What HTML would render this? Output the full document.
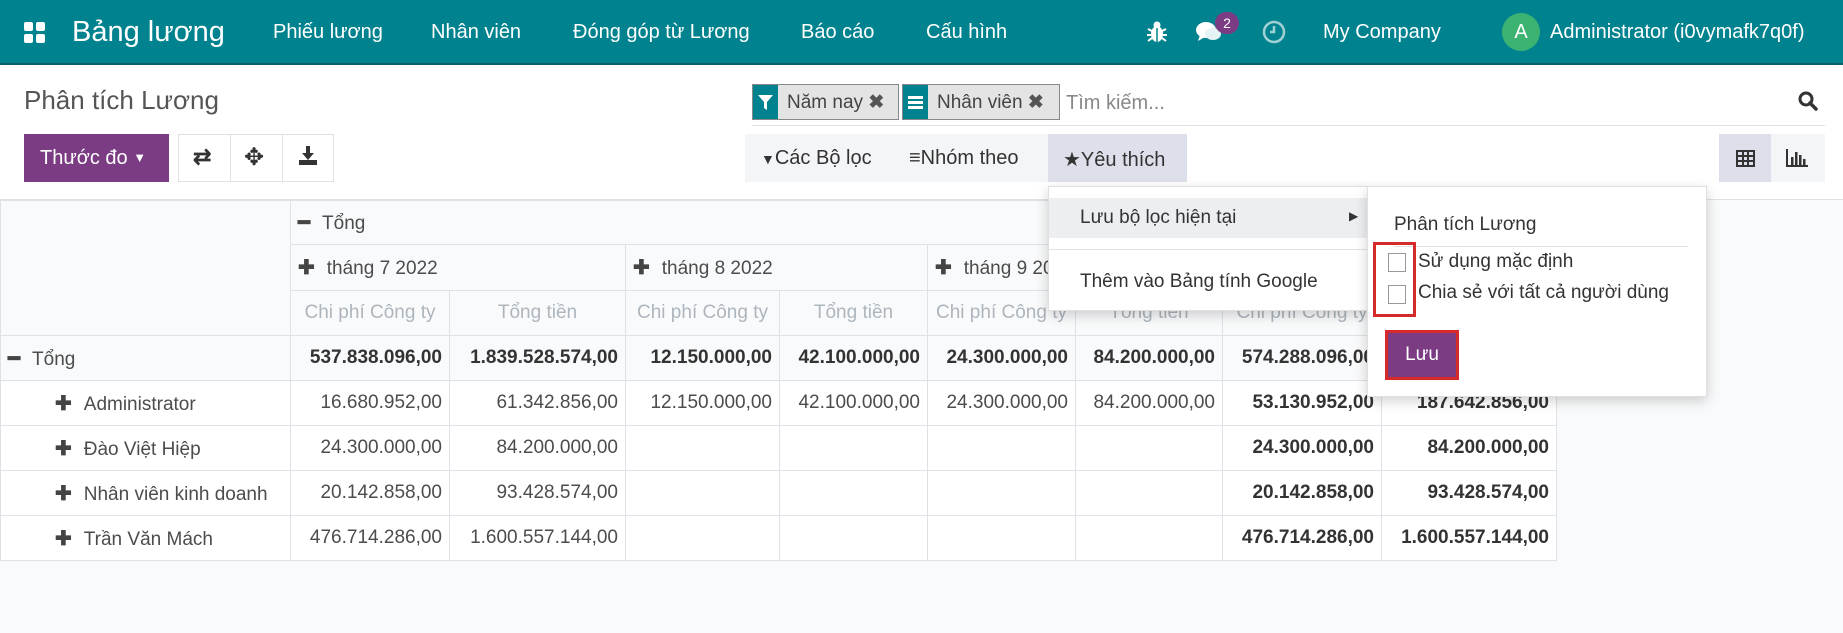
<!DOCTYPE html>
<html><head><meta charset="utf-8"><style>
*{box-sizing:border-box;margin:0;padding:0}
body{width:1843px;height:633px;overflow:hidden;background:#f9fafb;font-family:"Liberation Sans",sans-serif;color:#4c4c4c;position:relative}
.a{position:absolute;white-space:nowrap}
.nav{left:0;top:0;width:1843px;height:65px;background:#00838f;border-bottom:2px solid #0b5f66;color:#fff}
.nav .a{top:0;line-height:64px;font-size:20px;color:#fff}
.cp{left:0;top:65px;width:1843px;height:135px;background:#fff;border-bottom:1px solid #dee2e6}
table{position:absolute;left:0;top:200px;border-collapse:collapse;font-size:19px;color:#4c4c4c}
td{border:1px solid #dee2e6;height:45px;padding:0 7px;white-space:nowrap;background:#fff}
.h{background:#f9fafb}
.m{color:#adb5bd;text-align:center}
.r{text-align:right}
.b{font-weight:bold;color:#333}
.pl{font-weight:bold;font-size:20px;margin-right:12px;color:#444}
</style></head><body>
<div class="a nav">
 <svg class="a" style="left:24px;top:22px" width="22" height="22" viewBox="0 0 22 22" fill="#fff"><rect x="0" y="0" width="9" height="9" rx="2"/><rect x="12" y="0" width="9" height="9" rx="2"/><rect x="0" y="12" width="9" height="9" rx="2"/><rect x="12" y="12" width="9" height="9" rx="2"/></svg>
 <div class="a" style="left:72px;font-size:29px">Bảng lương</div>
 <div class="a" style="left:273px">Phiếu lương</div>
 <div class="a" style="left:431px">Nhân viên</div>
 <div class="a" style="left:573px">Đóng góp từ Lương</div>
 <div class="a" style="left:801px">Báo cáo</div>
 <div class="a" style="left:926px">Cấu hình</div>
 <svg class="a" style="left:1147px;top:21px" width="20" height="22" viewBox="0 0 20 22" fill="#fff"><circle cx="10" cy="4" r="3.5"/><ellipse cx="10" cy="13" rx="6" ry="8"/><path d="M1 8L5 10M19 8L15 10M0 14H4M20 14H16M1 20L5 17M19 20L15 17" stroke="#fff" stroke-width="2"/><path d="M10 7V21" stroke="#00838f" stroke-width="1.5"/></svg>
 <svg class="a" style="left:1196px;top:20px" width="26" height="24" viewBox="0 0 26 24" fill="#fff"><ellipse cx="10" cy="10" rx="10" ry="8"/><path d="M4 15 L2 21 L9 17Z"/><ellipse cx="17" cy="14" rx="8" ry="6" fill="#e6f3f4"/></svg>
 <div class="a" style="left:1215px;top:12px;width:24px;height:22px;border-radius:11px;background:#7b3c83;line-height:22px;text-align:center;font-size:14px">2</div>
 <svg class="a" style="left:1262px;top:20px" width="24" height="24" viewBox="0 0 24 24" fill="none" stroke="#9fd0d4" stroke-width="2.5"><circle cx="12" cy="12" r="10"/><path d="M12 6V12H8"/></svg>
 <div class="a" style="left:1323px">My Company</div>
 <div class="a" style="left:1502px;top:13px;width:38px;height:38px;border-radius:50%;background:#3cb371;line-height:38px;text-align:center;font-size:20px">A</div>
 <div class="a" style="left:1550px">Administrator (i0vymafk7q0f)</div>
</div>
<div class="a cp">
 <div class="a" style="left:24px;top:20px;font-size:26px;color:#555">Phân tích Lương</div>
 <div class="a" style="left:752px;top:19px;width:147px;height:36px;border:1px solid #888;background:#e4e4e4"><div class="a" style="left:0;top:0;width:25px;height:34px;background:#00838f"></div><svg class="a" style="left:5px;top:10px" width="15" height="15" viewBox="0 0 15 15"><path d="M0 0H15L9 7V15L6 13V7Z" fill="#fff"/></svg><div class="a" style="left:34px;top:6px;font-size:19px;color:#444">Năm nay <b style="color:#555">✖</b></div></div>
 <div class="a" style="left:902px;top:19px;width:158px;height:36px;border:1px solid #888;background:#e4e4e4"><div class="a" style="left:0;top:0;width:25px;height:34px;background:#00838f"></div><svg class="a" style="left:5px;top:10px" width="15" height="15"><rect y="1" width="15" height="3" fill="#fff"/><rect y="6" width="15" height="3" fill="#fff"/><rect y="11" width="15" height="3" fill="#fff"/></svg><div class="a" style="left:34px;top:6px;font-size:19px;color:#444">Nhân viên <b style="color:#555">✖</b></div></div>
 <div class="a" style="left:1066px;top:27px;font-size:20px;color:#888">Tìm kiếm...</div>
 <div class="a" style="left:752px;top:60px;width:1073px;height:1px;background:#dee2e6"></div>
 <svg class="a" style="left:1798px;top:26px" width="20" height="20" viewBox="0 0 20 20"><circle cx="8" cy="8" r="6" fill="none" stroke="#333" stroke-width="3"/><path d="M12 12L18 18" stroke="#333" stroke-width="3.5" stroke-linecap="round"/></svg>
 <div class="a" style="left:24px;top:69px;width:145px;height:48px;background:#7b3c83;color:#fff;font-size:20px;line-height:48px;padding-left:16px">Thước đo <span style="font-size:13px;vertical-align:2px">▼</span></div>
 <div class="a" style="left:178px;top:69px;width:156px;height:48px;border:1px solid #dee2e6;background:#fff"></div>
 <div class="a" style="left:230px;top:69px;width:1px;height:48px;background:#dee2e6"></div>
 <div class="a" style="left:282px;top:69px;width:1px;height:48px;background:#dee2e6"></div>
 <div class="a" style="left:193px;top:79px;font-size:22px;color:#333;font-weight:bold">⇄</div>
 <div class="a" style="left:244px;top:78px;font-size:24px;color:#333">✥</div>
 <svg class="a" style="left:298px;top:81px" width="20" height="20" viewBox="0 0 20 20" fill="#333"><rect x="8" y="0" width="4" height="8"/><path d="M4 7H16L10 14Z"/><rect x="1" y="14" width="18" height="5"/></svg>
 <div class="a" style="left:745px;top:69px;width:442px;height:48px;background:#f4f5f7"></div>
 <div class="a" style="left:1048px;top:69px;width:139px;height:48px;background:#dde0ea"></div>
 <div class="a" style="left:761px;top:82px;font-size:20px;color:#333"><span style="font-size:14px">▼</span>Các Bộ lọc</div>
 <div class="a" style="left:909px;top:82px;font-size:20px;color:#333">≡Nhóm theo</div>
 <div class="a" style="left:1063px;top:82px;font-size:20px;color:#333">★Yêu thích</div>
 <div class="a" style="left:1719px;top:69px;width:106px;height:48px;background:#f4f5f7"></div>
 <div class="a" style="left:1719px;top:69px;width:52px;height:48px;background:#dde0ea"></div>
 <svg class="a" style="left:1736px;top:85px" width="19" height="17" viewBox="0 0 19 17" fill="none" stroke="#333" stroke-width="2"><rect x="1" y="1" width="17" height="15"/><path d="M1 6H18M1 11H18M7 1V16M12 1V16"/></svg>
 <svg class="a" style="left:1786px;top:84px" width="22" height="18" viewBox="0 0 22 18" fill="#333"><rect x="0" y="0" width="2" height="18"/><rect x="0" y="16" width="22" height="2"/><rect x="5" y="8" width="2.5" height="8"/><rect x="9" y="3" width="2.5" height="13"/><rect x="13" y="6" width="2.5" height="10"/><rect x="17" y="10" width="2.5" height="6"/></svg>
</div>
<table>
<colgroup><col style="width:290px"><col style="width:159px"><col style="width:176px"><col style="width:154px"><col style="width:148px"><col style="width:148px"><col style="width:147px"><col style="width:159px"><col style="width:175px"></colgroup>
<tr><td class="h" rowspan="3"></td><td class="h" colspan="8" style="height:44px"><span class="pl">━</span>Tổng</td></tr>
<tr><td class="h" colspan="2" style="height:46px"><span class="pl">✚</span>tháng 7 2022</td><td class="h" colspan="2"><span class="pl">✚</span>tháng 8 2022</td><td class="h" colspan="2"><span class="pl">✚</span>tháng 9 2022</td><td class="h" colspan="2"><span class="pl">✚</span>Tổng</td></tr>
<tr><td class="h m">Chi phí Công ty</td><td class="h m">Tổng tiền</td><td class="h m">Chi phí Công ty</td><td class="h m">Tổng tiền</td><td class="h m">Chi phí Công ty</td><td class="h m">Tổng tiền</td><td class="h m">Chi phí Công ty</td><td class="h m">Tổng tiền</td></tr>
<tr><td class="h"><span class="pl">━</span>Tổng</td><td class="h r b">537.838.096,00</td><td class="h r b">1.839.528.574,00</td><td class="h r b">12.150.000,00</td><td class="h r b">42.100.000,00</td><td class="h r b">24.300.000,00</td><td class="h r b">84.200.000,00</td><td class="h r b">574.288.096,00</td><td class="h r b">1.966.828.574,00</td></tr>
<tr><td style="padding-left:54px"><span class="pl">✚</span>Administrator</td><td class="r">16.680.952,00</td><td class="r">61.342.856,00</td><td class="r">12.150.000,00</td><td class="r">42.100.000,00</td><td class="r">24.300.000,00</td><td class="r">84.200.000,00</td><td class="r b">53.130.952,00</td><td class="r b">187.642.856,00</td></tr>
<tr><td style="padding-left:54px"><span class="pl">✚</span>Đào Việt Hiệp</td><td class="r">24.300.000,00</td><td class="r">84.200.000,00</td><td></td><td></td><td></td><td></td><td class="r b">24.300.000,00</td><td class="r b">84.200.000,00</td></tr>
<tr><td style="padding-left:54px"><span class="pl">✚</span>Nhân viên kinh doanh</td><td class="r">20.142.858,00</td><td class="r">93.428.574,00</td><td></td><td></td><td></td><td></td><td class="r b">20.142.858,00</td><td class="r b">93.428.574,00</td></tr>
<tr><td style="padding-left:54px"><span class="pl">✚</span>Trần Văn Mách</td><td class="r">476.714.286,00</td><td class="r">1.600.557.144,00</td><td></td><td></td><td></td><td></td><td class="r b">476.714.286,00</td><td class="r b">1.600.557.144,00</td></tr>
</table>
<div class="a" style="left:1048px;top:186px;width:320px;height:125px;background:#fff;box-shadow:0 4px 12px rgba(0,0,0,.18);border:1px solid #e0e0e0">
 <div class="a" style="left:0;top:11px;width:318px;height:40px;background:#eceef1"></div>
 <div class="a" style="left:31px;top:20px;font-size:19px;color:#333">Lưu bộ lọc hiện tại</div>
 <div class="a" style="left:300px;top:22px;font-size:12px;color:#333">▶</div>
 <div class="a" style="left:0;top:62px;width:318px;height:1px;background:#dee2e6"></div>
 <div class="a" style="left:31px;top:84px;font-size:19px;color:#333">Thêm vào Bảng tính Google</div>
</div>
<div class="a" style="left:1367px;top:186px;width:340px;height:211px;background:#fff;box-shadow:0 4px 12px rgba(0,0,0,.18);border:1px solid #e0e0e0">
 <div class="a" style="left:26px;top:27px;font-size:19px;color:#333">Phân tích Lương</div>
 <div class="a" style="left:26px;top:59px;width:294px;height:1px;background:#dee2e6"></div>
 <div class="a" style="left:5px;top:55px;width:43px;height:75px;border:3px solid #d62a2a"></div>
 <div class="a" style="left:20px;top:66px;width:18px;height:19px;border:1px solid #999;background:#fff"></div>
 <div class="a" style="left:20px;top:98px;width:18px;height:19px;border:1px solid #999;background:#fff"></div>
 <div class="a" style="left:50px;top:64px;font-size:19px;color:#333">Sử dụng mặc định</div>
 <div class="a" style="left:50px;top:95px;font-size:19px;color:#333">Chia sẻ với tất cả người dùng</div>
 <div class="a" style="left:17px;top:143px;width:74px;height:50px;border:3px solid #d62a2a;background:#7b3c83;color:#fff;font-size:19px;line-height:44px;text-align:center">Lưu</div>
</div>
</body></html>
